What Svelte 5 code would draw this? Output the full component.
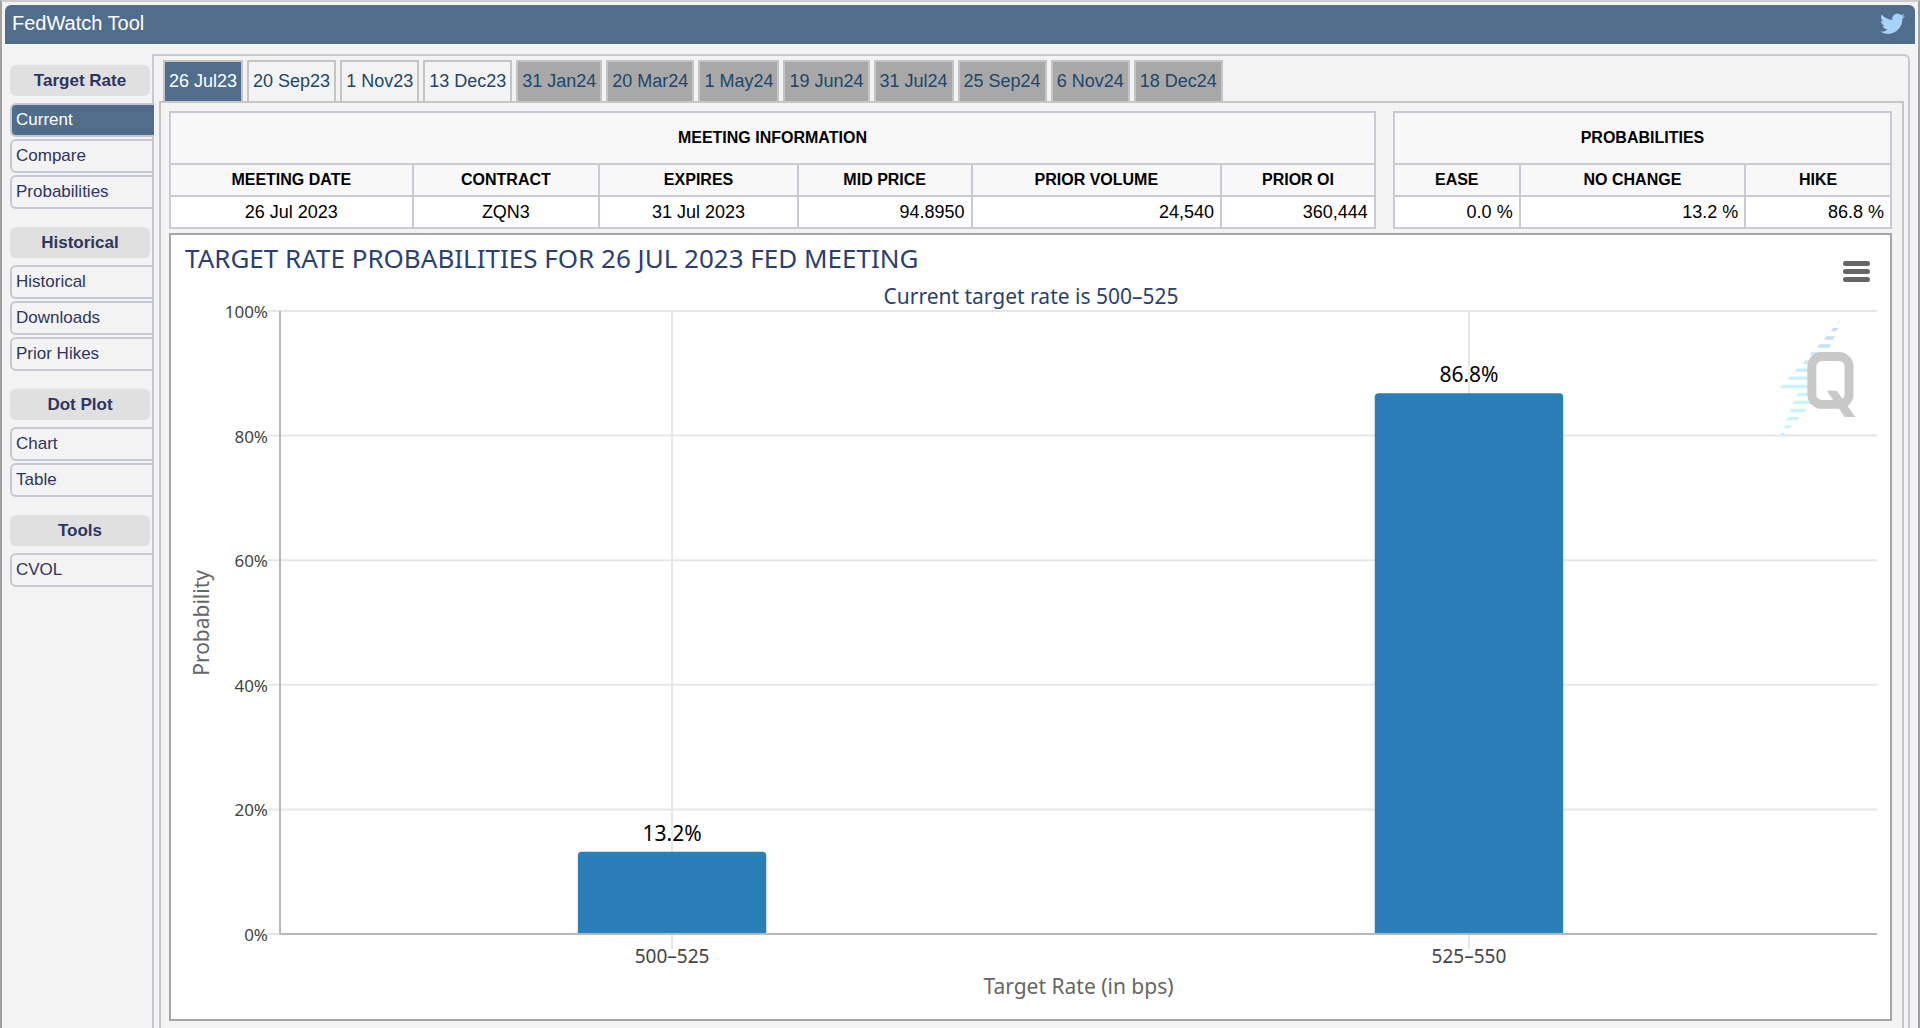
<script>
    const menu = [
        { title: 'Target Rate', items: ['Current', 'Compare', 'Probabilities'] },
        { title: 'Historical', items: ['Historical', 'Downloads', 'Prior Hikes'] },
        { title: 'Dot Plot', items: ['Chart', 'Table'] },
        { title: 'Tools', items: ['CVOL'] }
    ];

    const meetings = [
        { label: '26 Jul23' },
        { label: '20 Sep23' },
        { label: '1 Nov23' },
        { label: '13 Dec23' },
        { label: '31 Jan24', far: true },
        { label: '20 Mar24', far: true },
        { label: '1 May24', far: true },
        { label: '19 Jun24', far: true },
        { label: '31 Jul24', far: true },
        { label: '25 Sep24', far: true },
        { label: '6 Nov24', far: true },
        { label: '18 Dec24', far: true }
    ];

    const info = [
        { head: 'Meeting Date', value: '26 Jul 2023', width: 243 },
        { head: 'Contract', value: 'ZQN3', width: 187 },
        { head: 'Expires', value: '31 Jul 2023', width: 199 },
        { head: 'Mid Price', value: '94.8950', width: 174, num: true },
        { head: 'Prior Volume', value: '24,540', width: 250, num: true },
        { head: 'Prior OI', value: '360,444', width: 154, num: true }
    ];

    const probabilities = [
        { head: 'Ease', value: '0.0 %', width: 126, num: true },
        { head: 'No Change', value: '13.2 %', width: 226, num: true },
        { head: 'Hike', value: '86.8 %', width: 146, num: true }
    ];

    const tables = [
        { title: 'Meeting Information', cols: info },
        { title: 'Probabilities', cols: probabilities }
    ];

    // x is the centre of the bar, in percent of the plot width
    const bars = [
        { range: '500–525', value: 13.2, x: 24.55 },
        { range: '525–550', value: 86.8, x: 74.45 }
    ];
    const barWidth = 11.8;
    const ticks = [100, 80, 60, 40, 20, 0];

    // logo stripes: left, right, y
    const stripes = [
        [411, 416, 966], [392, 411, 988], [371, 401, 1013], [350, 391, 1037],
        [328, 375, 1061], [306, 340, 1086], [284, 335, 1110], [262, 335, 1134],
        [239, 335, 1159], [287, 335, 1183], [276, 335, 1207], [266, 316, 1231],
        [257, 295, 1256], [248, 272, 1280], [238, 250, 1304]
    ];

    let activeItem = 'Current';
    let activeMeeting = '26 Jul23';

    const total = (cols) => cols.reduce((sum, c) => sum + c.width, 0);
</script>

<div class="page">
    <header class="topbar">
        <h1>FedWatch Tool</h1>
        <a href="#twitter" aria-label="Twitter">
            <svg viewBox="0 0 24 20" width="25" height="22">
                <path d="M24 2.400c-.9.4-1.8.7-2.8.8 1-.6 1.800-1.600 2.200-2.700-1 .6-2 1-3.100 1.200A4.900 4.900 0 0 0 11.900 6.100C7.800 5.900 4.200 3.900 1.700.9A4.900 4.900 0 0 0 3.200 7.500c-.8 0-1.600-.2-2.200-.6v.1c0 2.400 1.700 4.400 3.900 4.800-.7.2-1.500.2-2.200.1.600 2 2.400 3.400 4.600 3.400A9.900 9.900 0 0 1 0 17.300 14 14 0 0 0 7.500 19.500c9.100 0 14-7.500 14-14v-.6c1-.7 1.800-1.600 2.500-2.500z" />
            </svg>
        </a>
    </header>

    <div class="body">
        <nav class="sidebar">
            {#each menu as group}
                <section>
                    <h2>{group.title}</h2>
                    {#each group.items as item}
                        <button
                            class="item"
                            class:active={activeItem === item}
                            on:click={() => (activeItem = item)}
                        >{item}</button>
                    {/each}
                </section>
            {/each}
        </nav>

        <main>
            <div class="tabs">
                {#each meetings as m}
                    <button
                        class="tab"
                        class:far={m.far}
                        class:active={activeMeeting === m.label}
                        on:click={() => (activeMeeting = m.label)}
                    >{m.label}</button>
                {/each}
            </div>

            <div class="panel">
                <div class="tables">
                    {#each tables as t}
                        <table style="flex: {total(t.cols)} 1 0">
                            <thead>
                                <tr class="caption"><th colspan={t.cols.length}>{t.title}</th></tr>
                                <tr>
                                    {#each t.cols as c}
                                        <th style="width: {(c.width / total(t.cols)) * 100}%">{c.head}</th>
                                    {/each}
                                </tr>
                            </thead>
                            <tbody>
                                <tr>
                                    {#each t.cols as c}
                                        <td class:num={c.num}>{c.value}</td>
                                    {/each}
                                </tr>
                            </tbody>
                        </table>
                    {/each}
                </div>

                <div class="chart">
                    <h3>TARGET RATE PROBABILITIES FOR 26 JUL 2023 FED MEETING</h3>
                    <p class="subtitle">Current target rate is 500–525</p>
                    <button class="export" aria-label="Chart menu">
                        <span></span><span></span><span></span>
                    </button>

                    <div class="plot-row">
                        <div class="y-title"><span>Probability</span></div>
                        <div class="y-labels">
                            {#each ticks as t}
                                <span>{t}%</span>
                            {/each}
                        </div>
                        <div class="plot">
                            <svg class="canvas" width="100%" height="100%">
                                {#each ticks as t}
                                    <line class="grid" x1="-12" x2="100%" y1="{100 - t}%" y2="{100 - t}%" />
                                {/each}
                                {#each bars as b}
                                    <line class="grid" x1="{b.x}%" x2="{b.x}%" y1="0" y2="100%" />
                                {/each}
                                <svg width="100%" height="100%">
                                    {#each bars as b}
                                        <rect
                                            class="bar"
                                            x="{b.x - barWidth / 2}%"
                                            y="{100 - b.value}%"
                                            width="{barWidth}%"
                                            height="100%"
                                            rx="4"
                                        />
                                    {/each}
                                </svg>
                                <line class="axis" x1="0" x2="0" y1="0" y2="100%" />
                                <line class="axis" x1="0" x2="100%" y1="100%" y2="100%" />
                                {#each bars as b}
                                    <text class="value" x="{b.x}%" y="{100 - b.value}%" dy="-11">{b.value}%</text>
                                {/each}
                            </svg>
                            <svg class="logo" viewBox="236 960 232 350" width="77" height="117" aria-hidden="true">
                                <defs>
                                    <linearGradient id="stripe" gradientUnits="userSpaceOnUse" x1="0" x2="0" y1="960" y2="1160">
                                        <stop offset="0" stop-color="#c4d4fb" />
                                        <stop offset="1" stop-color="#c8f4fe" />
                                    </linearGradient>
                                </defs>
                                {#each stripes as [x1, x2, y]}
                                    <polygon
                                        fill="url(#stripe)"
                                        points="{x1},{y + 5} {x1 + 7},{y - 5} {x2 + 4},{y - 5} {x2 - 3},{y + 5}"
                                    />
                                {/each}
                                <rect x="335" y="1069" width="112" height="144" rx="30" fill="#fff" stroke="#c8c8c8" stroke-width="27" />
                                <polygon fill="#c8c8c8" points="380,1172 410,1172 466,1251 434,1251" />
                            </svg>
                        </div>
                    </div>

                    <div class="x-axis">
                        <svg class="canvas" width="100%" height="38">
                            {#each bars as b}
                                <line class="grid" x1="{b.x}%" x2="{b.x}%" y1="1" y2="15" />
                                <text class="category" x="{b.x}%" y="29">{b.range}</text>
                            {/each}
                        </svg>
                        <p>Target Rate (in bps)</p>
                    </div>
                </div>
            </div>
        </main>
    </div>
</div>

<style>
    :global(body) {
        background: #f3f3f3;
    }

    .page {
        box-sizing: border-box;
        min-height: 100vh;
        display: flex;
        flex-direction: column;
        padding: 3px 3px 0;
        border: 2px solid #a0a0a0;
        border-top-color: #ccc;
        border-bottom: none;
        font-family: Arial, "Liberation Sans", sans-serif;
        font-size: 18px;
    }

    h1, h2, h3, p {
        margin: 0;
        font-weight: normal;
    }

    button {
        font: inherit;
        cursor: pointer;
    }

    .topbar {
        display: flex;
        justify-content: space-between;
        height: 39px;
        padding: 0 10px 0 7px;
        background: #506d8c;
        border-radius: 6px 6px 0 0;
    }

    .topbar h1 {
        font-size: 20px;
        line-height: 36px;
        color: #fff;
    }

    .topbar a {
        padding-top: 8px;
    }

    .topbar path {
        fill: #a5d4f8;
    }

    .body {
        flex: 1;
        display: flex;
        padding-top: 10px;
    }

    .sidebar {
        flex: none;
        width: 142px;
        padding: 11px 0 0 5px;
    }

    .sidebar section {
        display: flex;
        flex-direction: column;
        gap: 2px;
        margin-bottom: 18px;
    }

    .sidebar h2 {
        margin: 0 2px 5px 0;
        background: #e0e0e0;
        border-radius: 6px;
        font-size: 17px;
        font-weight: bold;
        line-height: 31px;
        text-align: center;
        color: #2f355f;
    }

    .item {
        height: 34px;
        padding: 0 0 0 4px;
        background: #f3f3f3;
        border: 2px solid #c6c8d4;
        border-right: none;
        border-radius: 6px 0 0 6px;
        font-size: 17px;
        text-align: left;
        color: #2f355f;
    }

    .item.active {
        position: relative;
        margin-right: -2px;
        background: #506d8c;
        color: #fff;
    }

    main {
        flex: 1;
        min-width: 0;
        display: flex;
        flex-direction: column;
        margin-right: 5px;
        padding: 4px 4px 0 5px;
        border: 2px solid #c6c8d4;
        border-bottom: none;
        border-radius: 0 6px 0 0;
    }

    .tabs {
        display: flex;
        gap: 4px;
        padding-left: 4px;
    }

    .tab {
        height: 41px;
        padding: 0 4px;
        background: #f3f3f3;
        border: 2px solid #c4c4c4;
        border-bottom: none;
        white-space: nowrap;
        color: #20476a;
    }

    .tab.far {
        background: #a8a8a8;
    }

    .tab.active {
        background: #506d8c;
        color: #fff;
    }

    .panel {
        flex: 1;
        display: flex;
        flex-direction: column;
        padding: 8px 10px 7px 8px;
        border: 2px solid #c6c6c6;
        border-bottom: none;
    }

    .tables {
        display: flex;
        gap: 17px;
        margin-bottom: 4px;
    }

    table {
        display: table;
        border-collapse: collapse;
        background: #fff;
    }

    th, td {
        box-sizing: border-box;
        height: 32px;
        padding: 0 6px;
        border: 2px solid #c9cad5;
        text-align: center;
        color: #000;
    }

    th {
        background: #f8f8f8;
        font-size: 16px;
        text-transform: uppercase;
    }

    .caption th {
        height: 52px;
    }

    td.num {
        text-align: right;
    }

    .chart {
        position: relative;
        flex: 1;
        display: flex;
        flex-direction: column;
        padding: 7px 13px 0 14px;
        background: #fff;
        border: 2px solid #a6a6a6;
        font-family: "Lucida Grande", "Noto Sans", sans-serif;
    }

    .chart h3 {
        font-size: 26px;
        line-height: 32px;
        color: #2b3f70;
    }

    .subtitle {
        margin: 8px 0 1px;
        font-size: 21px;
        line-height: 28px;
        text-align: center;
        color: #2b3f70;
    }

    .export {
        position: absolute;
        top: 26px;
        right: 20px;
        display: flex;
        flex-direction: column;
        gap: 3px;
        width: 27px;
        padding: 0;
        background: none;
        border: none;
    }

    .export span {
        height: 5px;
        border-radius: 3px;
        background: #666;
    }

    .plot-row {
        flex: 1;
        min-height: 320px;
        display: flex;
    }

    .y-title {
        width: 32px;
        display: flex;
        align-items: center;
        justify-content: center;
        font-size: 21px;
        color: #666;
    }

    .y-title span {
        writing-mode: vertical-rl;
        transform: rotate(180deg);
    }

    .y-labels {
        width: 51px;
        display: flex;
        flex-direction: column;
        justify-content: space-between;
        margin: -11px 12px -13px 0;
        font-size: 17px;
        line-height: 24px;
        text-align: right;
        color: #444;
    }

    .plot {
        position: relative;
        flex: 1;
    }

    .canvas {
        display: block;
        overflow: visible;
    }

    .plot .canvas {
        position: absolute;
    }

    .grid {
        stroke: #e6e6e6;
        stroke-width: 2;
    }

    .axis {
        stroke: #b8b8b8;
        stroke-width: 2;
    }

    .bar {
        fill: #2a7fb9;
    }

    .value {
        font-size: 21px;
        text-anchor: middle;
        fill: #000;
        stroke: #fff;
        stroke-width: 3;
        paint-order: stroke;
    }

    .category {
        font-size: 19px;
        text-anchor: middle;
        fill: #444;
    }

    .logo {
        position: absolute;
        top: 9px;
        right: 21px;
    }

    .x-axis {
        margin-left: 95px;
        padding-bottom: 19px;
    }

    .x-axis p {
        font-size: 21px;
        line-height: 28px;
        text-align: center;
        color: #666;
    }
</style>
